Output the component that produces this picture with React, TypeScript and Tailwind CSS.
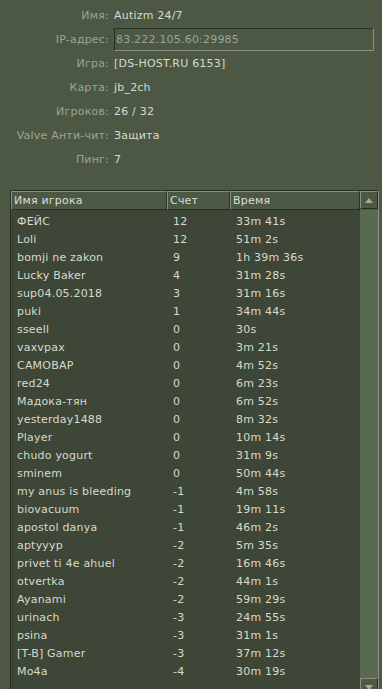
const info: [string, string][] = [
  ["Имя", "Autizm 24/7"],
  ["IP-адрес", "83.222.105.60:29985"],
  ["Игра", "[DS-HOST.RU 6153]"],
  ["Карта", "jb_2ch"],
  ["Игроков", "26 / 32"],
  ["Valve Анти-чит", "Защита"],
  ["Пинг", "7"],
];

const players: [string, string, string][] = [
  ["ФЕЙС", "12", "33m 41s"],
  ["Loli", "12", "51m 2s"],
  ["bomji ne zakon", "9", "1h 39m 36s"],
  ["Lucky Baker", "4", "31m 28s"],
  ["sup04.05.2018", "3", "31m 16s"],
  ["puki", "1", "34m 44s"],
  ["sseell", "0", "30s"],
  ["vaxvpax", "0", "3m 21s"],
  ["САМОВАР", "0", "4m 52s"],
  ["red24", "0", "6m 23s"],
  ["Мадока-тян", "0", "6m 52s"],
  ["yesterday1488", "0", "8m 32s"],
  ["Player", "0", "10m 14s"],
  ["chudo yogurt", "0", "31m 9s"],
  ["sminem", "0", "50m 44s"],
  ["my anus is bleeding", "-1", "4m 58s"],
  ["biovacuum", "-1", "19m 11s"],
  ["apostol danya", "-1", "46m 2s"],
  ["aptyyyp", "-2", "5m 35s"],
  ["privet ti 4e ahuel", "-2", "16m 46s"],
  ["otvertka", "-2", "44m 1s"],
  ["Ayanami", "-2", "59m 29s"],
  ["urinach", "-3", "24m 55s"],
  ["psina", "-3", "31m 1s"],
  ["[T-B] Gamer", "-3", "37m 12s"],
  ["Mo4a", "-4", "30m 19s"],
];

function Arrow({ up }: { up?: boolean }) {
  return (
    <svg width="8" height="5" viewBox="0 0 8 5">
      <polygon points={up ? "0,5 8,5 4,0" : "0,0 8,0 4,5"} fill="#a0aa95" />
    </svg>
  );
}

function HeaderCell({ label, className }: { label: string; className: string }) {
  return (
    <div
      className={`${className} flex h-full items-center border-t border-l border-t-[#889180] border-l-[#889180] border-r border-b border-r-[#292e23] border-b-[#292e23] pl-[2px] text-[#d8ded3]`}
    >
      {label}
    </div>
  );
}

export default function App() {
  return (
    <div
      className="w-[382px] h-[689px] overflow-hidden bg-[#4c5844] text-[11px] leading-none tracking-[0.2px]"
      style={{ fontFamily: '"DejaVu Sans", Verdana, sans-serif' }}
    >
      <div className="pt-[3px]">
        {info.map(([label, value], i) => (
          <div key={label} className="flex h-[24px] items-center">
            <div className="w-[109px] shrink-0 text-right text-[#9ba591]">{label}:</div>
            {i === 1 ? (
              <div className="ml-[5px] flex h-[23px] w-[260px] items-center border-t border-l border-t-[#292e23] border-l-[#292e23] border-r border-b border-r-[#889180] border-b-[#889180] pl-[1px] text-[#9ba591]">
                {value}
              </div>
            ) : (
              <div className="ml-[5px] text-[#d6dacd]">{value}</div>
            )}
          </div>
        ))}
      </div>

      <div className="mt-[19px] ml-[10px] w-[369px] border-t border-l border-t-[#292e23] border-l-[#292e23] border-r border-r-[#889180] bg-[#3e4637]">
        <div className="flex h-[19px] bg-[#4c5844]">
          <HeaderCell label="Имя игрока" className="w-[156px]" />
          <HeaderCell label="Счет" className="w-[63px]" />
          <HeaderCell label="Время" className="flex-1" />
          <div className="flex h-[18px] w-[18px] items-center justify-center border-t border-l border-t-[#889180] border-l-[#889180] border-r border-b border-r-[#292e23] border-b-[#292e23]">
            <Arrow up />
          </div>
        </div>

        <div className="flex h-[486px]">
          <div className="flex-1 pt-[2px] text-[#d6dacd]">
            {players.map(([name, score, time]) => (
              <div key={name} className="flex h-[18px] items-center">
                <div className="w-[156px] pl-[6px] whitespace-nowrap">{name}</div>
                <div className="w-[63px] pl-[6px]">{score}</div>
                <div className="flex-1 pl-[6px]">{time}</div>
              </div>
            ))}
          </div>
          <div className="flex w-[18px] flex-col justify-end bg-[#5a6a50]">
            <div className="flex h-[18px] items-center justify-center border-t border-l border-t-[#889180] border-l-[#889180] border-r border-b border-r-[#292e23] border-b-[#292e23] bg-[#4c5844]">
              <Arrow />
            </div>
          </div>
        </div>
      </div>
    </div>
  );
}
